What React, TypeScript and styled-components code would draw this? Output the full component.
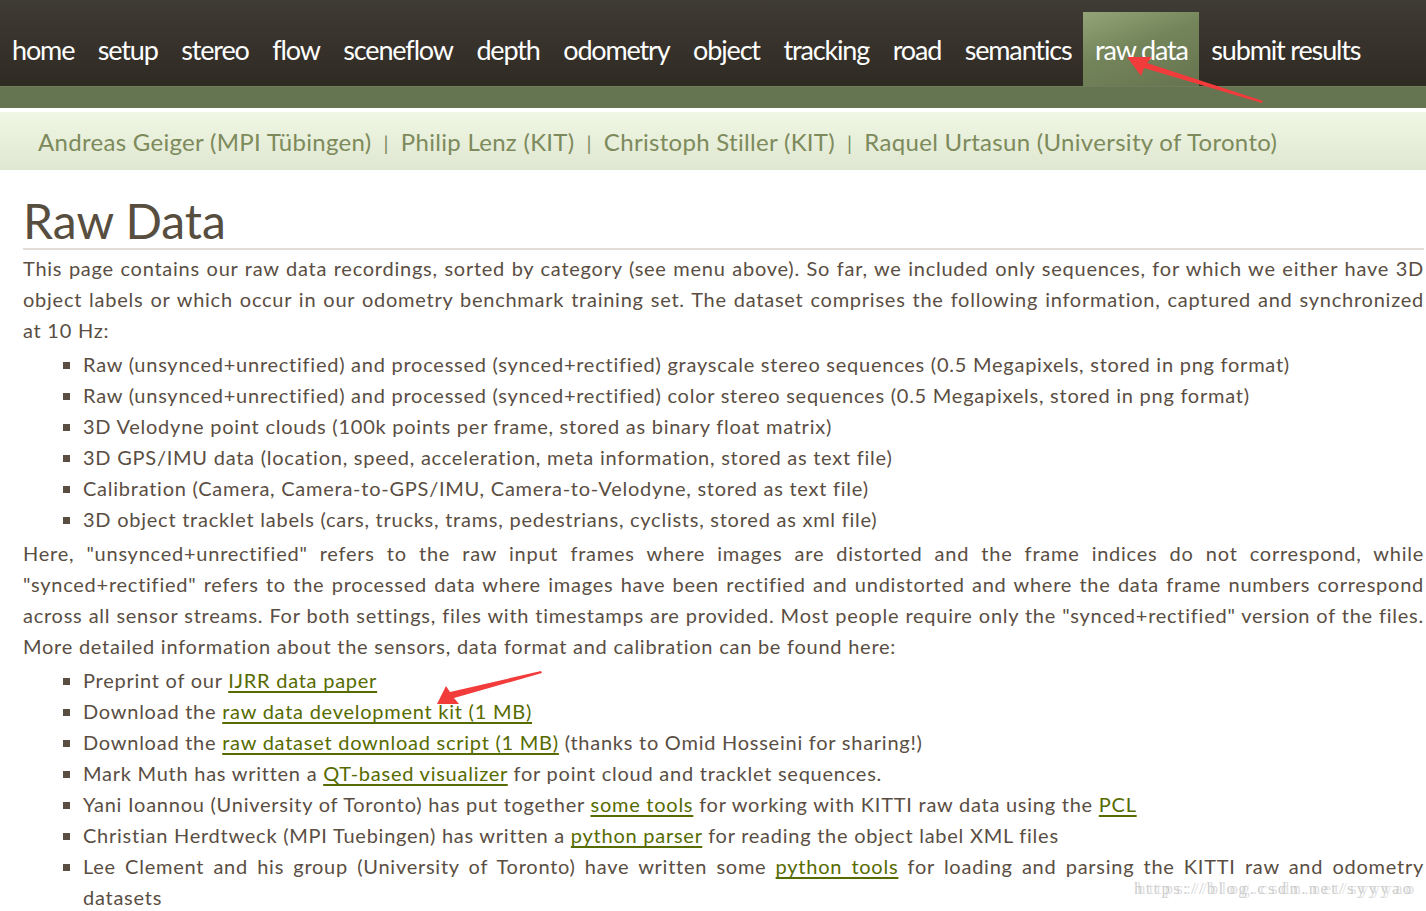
import styled, { createGlobalStyle } from "styled-components";

const GlobalStyle = createGlobalStyle`
    body {
        margin: 0;
        background: #ffffff;
        overflow: hidden;
        font-family: Lato, "Open Sans", sans-serif;
    }
`;

const Page = styled.div`
    position: relative;
    width: 1426px;
    height: 911px;
    overflow: hidden;
`;

const NavBar = styled.nav`
    height: 86px;
    display: flex;
    align-items: flex-end;
    background: linear-gradient(#3f3b35, #2f2a22);
`;

const NavItem = styled.a<{ $active?: boolean }>`
    height: 74px;
    display: flex;
    align-items: center;
    padding: 0 11.5px 0 12px;
    color: #ffffff;
    font-family: Lato, sans-serif;
    font-size: 27px;
    letter-spacing: -1.15px;
    text-decoration: none;
    background: ${(p) => (p.$active ? "linear-gradient(160deg, #93a578 0%, #74845a 45%, #65744f 100%)" : "transparent")};
`;

const GreenStrip = styled.div`
    height: 22px;
    background: #667551;
    border-top: 1px solid #6f7d5b;
    box-sizing: border-box;
`;

const AuthorBar = styled.div`
    margin-top: 4px;
    height: 58px;
    display: flex;
    align-items: center;
    padding-left: 38px;
    background: linear-gradient(#f0f8e5, #dfe6d1);
    color: #7d8a5b;
    font-size: 24px;
    letter-spacing: 0.3px;
`;

const Sep = styled.span`
    margin: 0 12px;
    font-size: 20px;
`;

const Content = styled.main`
    padding: 0 2px 0 23px;
    color: #5a4e43;
    font-size: 20px;
    letter-spacing: 0.75px;
    line-height: 31px;
    text-align: justify;
`;

const Title = styled.h1`
    margin: 24px 0 0;
    font-size: 48px;
    font-weight: 400;
    letter-spacing: 0;
    line-height: 54px;
    color: #574e3f;
    padding-bottom: 0;
    border-bottom: 2px solid #e1ddd6;
`;

const Para = styled.p`
    margin: 3px 0 0;
`;

const List = styled.ul`
    margin: 3px 0;
    padding-left: 60px;
    list-style: square;
`;

const Link = styled.a`
    color: #566b00;
    text-decoration: underline;
    text-underline-offset: 3px;
`;

const Overlay = styled.svg`
    position: absolute;
    left: 0;
    top: 0;
    pointer-events: none;
`;

const Watermark = styled.div`
    position: absolute;
    left: 1134px;
    top: 879px;
    font-family: "Liberation Serif", serif;
    font-size: 17px;
    letter-spacing: 3.2px;
    color: rgba(200, 200, 200, 0.9);
    text-shadow: 3px 0 0 rgba(215, 215, 215, 0.8);
`;

const navItems = ["home", "setup", "stereo", "flow", "sceneflow", "depth", "odometry", "object", "tracking", "road", "semantics", "raw data", "submit results"];

const authors = ["Andreas Geiger (MPI Tübingen)", "Philip Lenz (KIT)", "Christoph Stiller (KIT)", "Raquel Urtasun (University of Toronto)"];

export default function App() {
    return (
        <Page>
            <GlobalStyle />
            <NavBar>
                {navItems.map((item) => (
                    <NavItem key={item} $active={item === "raw data"}>{item}</NavItem>
                ))}
            </NavBar>
            <GreenStrip />
            <AuthorBar>
                {authors.map((a, i) => (
                    <span key={a}>
                        {i > 0 && <Sep>|</Sep>}
                        {a}
                    </span>
                ))}
            </AuthorBar>
            <Content>
                <Title>Raw Data</Title>
                <Para>
                    This page contains our raw data recordings, sorted by category (see menu above). So far, we included only sequences, for which we either have 3D object labels or which occur in our odometry benchmark training set. The dataset comprises the following information, captured and synchronized at 10 Hz:
                </Para>
                <List>
                    <li>Raw (unsynced+unrectified) and processed (synced+rectified) grayscale stereo sequences (0.5 Megapixels, stored in png format)</li>
                    <li>Raw (unsynced+unrectified) and processed (synced+rectified) color stereo sequences (0.5 Megapixels, stored in png format)</li>
                    <li>3D Velodyne point clouds (100k points per frame, stored as binary float matrix)</li>
                    <li>3D GPS/IMU data (location, speed, acceleration, meta information, stored as text file)</li>
                    <li>Calibration (Camera, Camera-to-GPS/IMU, Camera-to-Velodyne, stored as text file)</li>
                    <li>3D object tracklet labels (cars, trucks, trams, pedestrians, cyclists, stored as xml file)</li>
                </List>
                <Para>
                    Here, "unsynced+unrectified" refers to the raw input frames where images are distorted and the frame indices do not correspond, while "synced+rectified" refers to the processed data where images have been rectified and undistorted and where the data frame numbers correspond across all sensor streams. For both settings, files with timestamps are provided. Most people require only the "synced+rectified" version of the files. More detailed information about the sensors, data format and calibration can be found here:
                </Para>
                <List>
                    <li>Preprint of our <Link>IJRR data paper</Link></li>
                    <li>Download the <Link>raw data development kit (1 MB)</Link></li>
                    <li>Download the <Link>raw dataset download script (1 MB)</Link> (thanks to Omid Hosseini for sharing!)</li>
                    <li>Mark Muth has written a <Link>QT-based visualizer</Link> for point cloud and tracklet sequences.</li>
                    <li>Yani Ioannou (University of Toronto) has put together <Link>some tools</Link> for working with KITTI raw data using the <Link>PCL</Link></li>
                    <li>Christian Herdtweck (MPI Tuebingen) has written a <Link>python parser</Link> for reading the object label XML files</li>
                    <li>Lee Clement and his group (University of Toronto) have written some <Link>python tools</Link> for loading and parsing the KITTI raw and odometry datasets</li>
                </List>
            </Content>
            <Overlay width="1426" height="911" viewBox="0 0 1426 911">
                <polygon points="1127,57 1152,57 1147,63 1263,101 1262,103 1144,68 1141,76" fill="#f23b3b" />
                <polygon points="437,704 446,686 450,692 541,671 542,673 454,698 459,704" fill="#f23b3b" />
            </Overlay>
            <Watermark>https://blog.csdn.net/syyyao</Watermark>
        </Page>
    );
}
